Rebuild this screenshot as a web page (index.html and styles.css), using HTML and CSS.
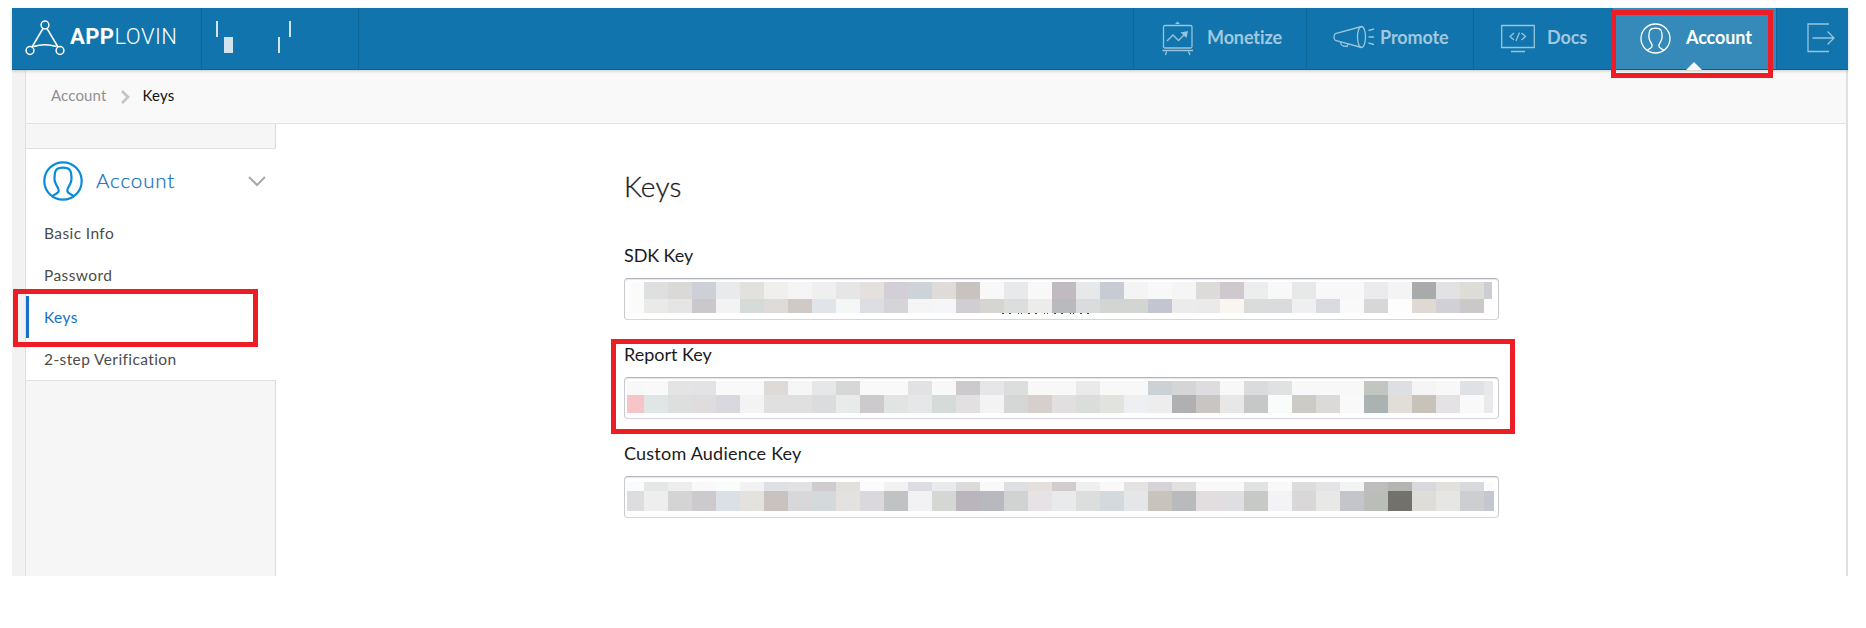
FILE: index.html
```html
<!DOCTYPE html>
<html lang="en">
<head>
<meta charset="utf-8">
<title>AppLovin - Keys</title>
<link rel="stylesheet" href="styles.css">
</head>
<body>
<svg class="defs" aria-hidden="true">
  <symbol id="person" viewBox="0 0 40 40">
    <circle cx="20" cy="20" r="18.7"/>
    <path d="M9.5 35.2C12 32.5 15.700 33 15.700 29.500C15.700 27 13.800 25.500 13 23.200C12 21.500 11.500 20.500 11.500 18C11.500 10 12.500 6.700 20 6.700C27.500 6.700 28.500 10 28.500 18C28.500 20.500 28 21.500 27 23.200C26.200 25.500 24.300 27 24.300 29.500C24.300 33 28 32.500 30.500 35.200"/>
  </symbol>
</svg>
<div class="app">
  <header class="topbar">
    <a class="brand">
      <svg class="brand-mark" width="40" height="36" viewBox="0 0 40 36">
        <circle cx="20" cy="5" r="3.900"/><circle cx="5" cy="30.500" r="3.900"/><circle cx="35" cy="30.500" r="3.900"/>
        <path d="M18 8.500L7 27M22 8.500L33 27M8.500 26.500Q20 23 31.500 26.500"/>
      </svg>
      <span class="brand-name"><b>APP</b>LOVIN</span>
    </a>
    <div class="customer">
      <svg width="76" height="32" viewBox="0 0 76 32">
        <path d="M0 0h2v16H0zM8 16h9v16H8zM62 16h2v16H62zM73 0h2v16H73z"/>
      </svg>
    </div>
    <nav class="nav">
      <a class="nav-item monetize">
        <svg width="32" height="35" viewBox="0 0 32 35">
          <rect x="1.500" y="4.500" width="28.500" height="22.500" rx="1.500"/>
          <path d="M.5 29.500H31M4.500 30.500L3.500 34M26.500 30.500L28 34M5 20L11 14L16.500 19.500L23 13"/>
          <path class="solid" d="M13 3L15.500 .5L18 3zM18.500 11.500L26 10L24.500 17z"/>
        </svg>
        <span>Monetize</span>
      </a>
      <a class="nav-item promote">
        <svg width="42" height="24" viewBox="0 0 42 24">
          <ellipse cx="28.500" cy="12" rx="4" ry="10.500"/>
          <path d="M28.500 1.500L2.500 8.500Q1 9.500 1 12Q1 14.500 2.500 15.500L28.500 22.500M7.500 17.500Q8 20.500 10.500 21L14 21.500L15 19.200M35.500 5.500L41 4M35.500 12H41M35.500 18L41 19.500"/>
        </svg>
        <span>Promote</span>
      </a>
      <a class="nav-item docs">
        <svg width="34" height="29" viewBox="0 0 34 29">
          <path d="M.7 1.500H33.300V23.500H.7zM10 27.500H24M13 9L9 12.500L13 16M20.500 9L24.500 12.500L20.500 16M18.500 8.500L15 17"/>
        </svg>
        <span>Docs</span>
      </a>
      <a class="nav-item account active">
        <svg class="person" width="31" height="31"><use href="#person"/></svg>
        <span>Account</span>
      </a>
      <a class="nav-item logout">
        <svg width="29" height="30" viewBox="0 0 29 30">
          <path d="M22 1H1V28.500H22M5.500 15H27M20.500 8.500L27 15L20.500 21.500"/>
        </svg>
      </a>
    </nav>
  </header>
  <div class="page">
    <div class="crumbs">
      <span>Account</span>
      <svg width="9" height="14" viewBox="0 0 9 14"><path d="M1 1L7 7L1 13"/></svg>
      <span class="here">Keys</span>
    </div>
    <div class="body">
      <aside class="sidebar">
        <div class="menu">
          <div class="menu-head">
            <svg class="person" width="40" height="40"><use href="#person"/></svg>
            <span>Account</span>
            <svg class="chevron" width="18" height="11" viewBox="0 0 18 11"><path d="M1 1L9 9L17 1"/></svg>
          </div>
          <a class="menu-item basic">Basic Info</a>
          <a class="menu-item password">Password</a>
          <a class="menu-item selected">Keys</a>
          <a class="menu-item twostep">2-step Verification</a>
        </div>
      </aside>
      <main class="content">
        <h1>Keys</h1>
        <section class="field"><label class="l-sdk">SDK Key</label><div class="box"><div class="mosaic sdk"></div>
          <svg class="trace" width="90" height="1"><path d="M0 .5H90"/></svg></div></section>
        <section class="field"><label class="l-report">Report Key</label><div class="box"><div class="mosaic report"></div></div></section>
        <section class="field"><label class="l-custom">Custom Audience Key</label><div class="box"><div class="mosaic custom"></div></div></section>
      </main>
    </div>
  </div>
</div>
<div class="mark mark-account"></div>
<div class="mark mark-menu"></div>
<div class="mark mark-report"></div>
<script src="script.js"></script>
</body>
</html>
```
FILE: styles.css
```css
* { box-sizing: border-box; }
body { margin: 0; padding: 8px 18px 0 12px; background: #fff; font-family: Lato, "Open Sans", sans-serif; color: #1b1b1b; }
svg { display: block; fill: none; flex: none; }
.defs { position: absolute; width: 0; height: 0; }
.app { width: 1836px; height: 568px; background: #f2f2f2; }

.topbar { display: flex; height: 62px; background: #1174ac; border-bottom: 1px solid #0c5f90; box-shadow: 0 1px 3px rgba(0,0,0,.2); position: relative; }
.brand { display: flex; width: 190px; padding: 12px 0 0 13px; border-right: 1px solid #0f6699; }
.brand-mark { stroke: #fff; stroke-width: 1.5; }
.brand-name { margin: 4px 0 0 5px; font: 300 22px/26px Roboto, sans-serif; color: #fff; letter-spacing: .45px; }
.brand-name b { font-weight: 700; }
.customer { width: 157px; padding: 13px 0 0 14px; border-right: 1px solid #0f6699; }
.customer svg { fill: #d0e3ef; }
.nav { display: flex; margin-left: auto; }
.nav-item { display: flex; height: 61px; border-left: 1px solid #0f6699; color: #a0c8df; font-weight: 700; font-size: 18px; line-height: 24px; letter-spacing: -.1px; }
.nav-item svg { stroke: #98c4dd; stroke-width: 1.3; }
.nav-item span { margin-top: 17px; white-space: nowrap; }
.nav-item .solid { fill: #98c4dd; stroke: none; }
.monetize { width: 173px; padding-left: 28px; }
.monetize svg { margin-top: 13px; }
.monetize span { margin-left: 13px; }
.promote { width: 167px; padding-left: 26px; }
.promote svg { margin-top: 17px; }
.promote span { margin-left: 5px; }
.docs { width: 140px; padding-left: 27px; }
.docs svg { margin-top: 16px; }
.docs span { margin-left: 12px; }
.account { width: 163px; padding-left: 27px; }
.account svg { margin-top: 15px; }
.account span { margin-left: 15px; }
.nav-item.active { background: #358ab9; color: #fff; border: 0; position: relative; }
.active::after { content: ""; position: absolute; left: 73px; bottom: -1px; border: 8px solid transparent; border-top: 0; border-bottom-color: #f9f9f9; }
.nav-item .person { stroke: #fff; stroke-width: 1.7; }
.logout { width: 72px; padding-left: 30px; }
.logout svg { margin-top: 15px; }

.page { margin-left: 13px; height: 506px; border: solid #e0e0e0; border-width: 0 2px 0 1px; background: #fff; }
.crumbs { display: flex; height: 54px; padding: 15px 0 0 25px; border-bottom: 1px solid #e2e2e2; background: #f9f9f9; font-size: 15px; line-height: 20px; letter-spacing: .15px; color: #909090; }
.crumbs svg { margin: 5px 13px 0 14px; stroke: #c4c4c4; stroke-width: 2.700; }
.here { color: #111; }
.body { display: flex; height: 452px; }
.sidebar { width: 250px; padding-top: 24px; background: linear-gradient(90deg, #f6f6f6 248px, #ededed 249px, #dcdcdc 249px); }
.menu { height: 233px; background: #fff; border: solid #e0e0e0; border-width: 1px 0; }
.menu-head { display: flex; height: 68px; padding: 12px 0 0 17px; color: #1471c4; font-size: 20.500px; line-height: 26px; }
.menu-head span { margin: 6px 0 0 13px; letter-spacing: .9px; font-weight: 300; -webkit-text-stroke: .25px #1471c4; }
.menu-head .person { stroke: #078cdb; stroke-width: 2.200; }
.chevron { margin: 15px 10px 0 auto; stroke: #a6a8ae; stroke-width: 2; }
.menu-item { display: block; height: 42px; padding: 6px 0 0 18px; color: #4c4c4c; font-size: 15.500px; line-height: 20px; letter-spacing: .4px; }
.menu-item.selected { height: 42px; border-left: 3px solid #1870c7; padding-left: 15px; color: #1470c5; margin-top: -5px; padding-top: 11px; margin-bottom: 5px; }
.content { padding: 44px 0 0 348px; }
h1 { margin: 0; font-weight: 300; font-size: 28px; line-height: 36px; letter-spacing: .2px; -webkit-text-stroke: .3px #1b1b1b; }
.field { height: 99px; }
h1 + .field { margin-top: 38px; }
.field label { display: block; height: 36px; font-size: 18px; line-height: 26px; white-space: nowrap; }
.field .l-sdk { letter-spacing: -.1px; }
.field .l-custom { letter-spacing: .22px; }
.box { width: 875px; height: 42px; border: 1px solid #c9c9cf; border-top-color: #b4b4bc; border-bottom-color: #d6d6da; border-radius: 4px; box-shadow: inset 0 1px 1px #e6e6e9; position: relative; }
.mosaic { display: grid; }
.sdk { margin: 3px 0 0 4px; grid-template: 17px 14px / 15px repeat(35, 24px) 8px; }
.report { margin: 3px 0 0 2px; grid-template: 14px 18px / 17px repeat(35, 24px) 9px; }
.custom { margin: 5px 0 0 2px; grid-template: 9px 20px / 17px repeat(35, 24px) 10px; }
.trace { position: absolute; left: 377px; top: 34px; stroke: #444; stroke-dasharray: 2 5 2 7 1 2 1 6; }
.mark { position: absolute; border: 5px solid #ee1c24; }
.mark-account { left: 1611px; top: 10px; width: 162px; height: 68px; }
.mark-menu { left: 13px; top: 289px; width: 245px; height: 58px; }
.mark-report { left: 611px; top: 339px; width: 904px; height: 95px; }
```
FILE: script.js
```js
// Pixelated key values: two rows of cell colours per field.
const cells = {
  sdk: `fbfbfb dde0df dbd9d7 cdd0d7 e8eaec e3e1dd f0efed f5f5f5 efefef e6e6e6 e5e0dd d2d0d6 ced3d8 dfdbd8 c9c3bf f8f8f8 e8e9eb f8f8f8
    c1bbc1 e7e8ea c7ccd4 f4f4f4 f8f8f8 f5f5f5 dcdbd9 cfc9cd eceeed f8f8f8 e7e9e8 f8f8f8 f8f8f8 ebebee f4f4f4 a9abaa e2e2e5 dddcd7 cbced3
    fbfbfb eaeae8 e5e5e5 cbc8cc f3f3f3 d5dbd9 dfdbd9 d0cac6 e1e5e9 f5f7f6 dddee4 d5d5d7 f5f5f5 f4f6f8 d0ced3 d6d5d2 dcdedd ececeb
    b9babe d9dbdd d3d5d3 d3d5d3 c3c6d0 ebebeb eaeaea f9f6ef d9dcdb d9dbdc efeff1 dadbe0 f9f9f9 d7d7d7 fdfdfd dedad3 d1d0d6 cbc8ca fdfdfd`,
  report: `f8f8f8 f9f9f9 e3e4e3 e3e2e5 f9f9f9 f9f9f9 dedad7 f6f6f6 e5e7e9 d6d7d6 f9f9f9 f9f9f9 e2e2e5 f8f8f8 cdcacd e6e6e8 dcdedd f8f8f8
    f8f8f8 eaeaea f8f8f8 f8f8f8 ccd1d6 d5d5d5 dedce0 f8f8f8 dadbdd dfe1e3 f8f8f8 f8f8f8 f8f8f8 c3c5c1 dddfe2 f5f5f5 f8f8f8 dee2e6 e8e8e8
    f7c4c7 e0e5e6 dcdfdd dfdcdd d8d8de f3f3f3 e0e0e1 e0e0e0 dbdcde e9ebea cdcacd e1e4e3 e6e7e9 d4dbd8 e3e0e2 f3f3f3 d5d7d6 d6cfcb
    e2dfe1 daddd9 e1e3de edeff2 ededed b0b0b3 c8c5c3 e7e7e7 c6c8c7 f9fcfb cdcbc5 dcdad9 f9f9f9 aab2b2 e1ddd9 c8c3ba e4e2e4 f9f9f9 eaeaed`,
  custom: `fafcfb e4e7e6 ededed f9f9f9 fafcfb f2f2f2 dfe0e6 e2e2e5 cfcccd e1e0dd fbfbfb f2f2f2 dddce2 e9eaec dbdbdb f9f9f9 dddfe2 e5e0dd
    d2cccc efefef f9f9f9 e5e2e4 d5d3d8 e2e1df f9f9f9 f9f9f9 e0e3e1 f9f9f9 dadddc e4e3e5 f2f4f3 bdbdbd b4b4b2 d7d9dd e3e1de d8d9dc fbfbfb
    dddde0 eeeeee d4d4d4 cdcacd dbe0e6 e3e2df c9c2be d8d8db d4dadc e4e2df dad8dc c1c2c4 f2f2f4 d5d7d5 bab4bc b8b9bf d0d3d1 e5e3e5
    e9eaec dcdddd d3d9dc e4e6e8 c9c3be b9babc e2dddf dfdfe1 c6c9c6 f3f3f6 dad7d8 e8e8e6 c4c5ca bbbdb9 72716c dfddd9 e6e6e4 cdced0 c4c6d0`
};
for (const [name, list] of Object.entries(cells)) {
  const grid = document.querySelector('.' + name);
  for (const colour of list.trim().split(/\s+/)) {
    const cell = document.createElement('i');
    cell.style.background = '#' + colour;
    grid.append(cell);
  }
}
```
